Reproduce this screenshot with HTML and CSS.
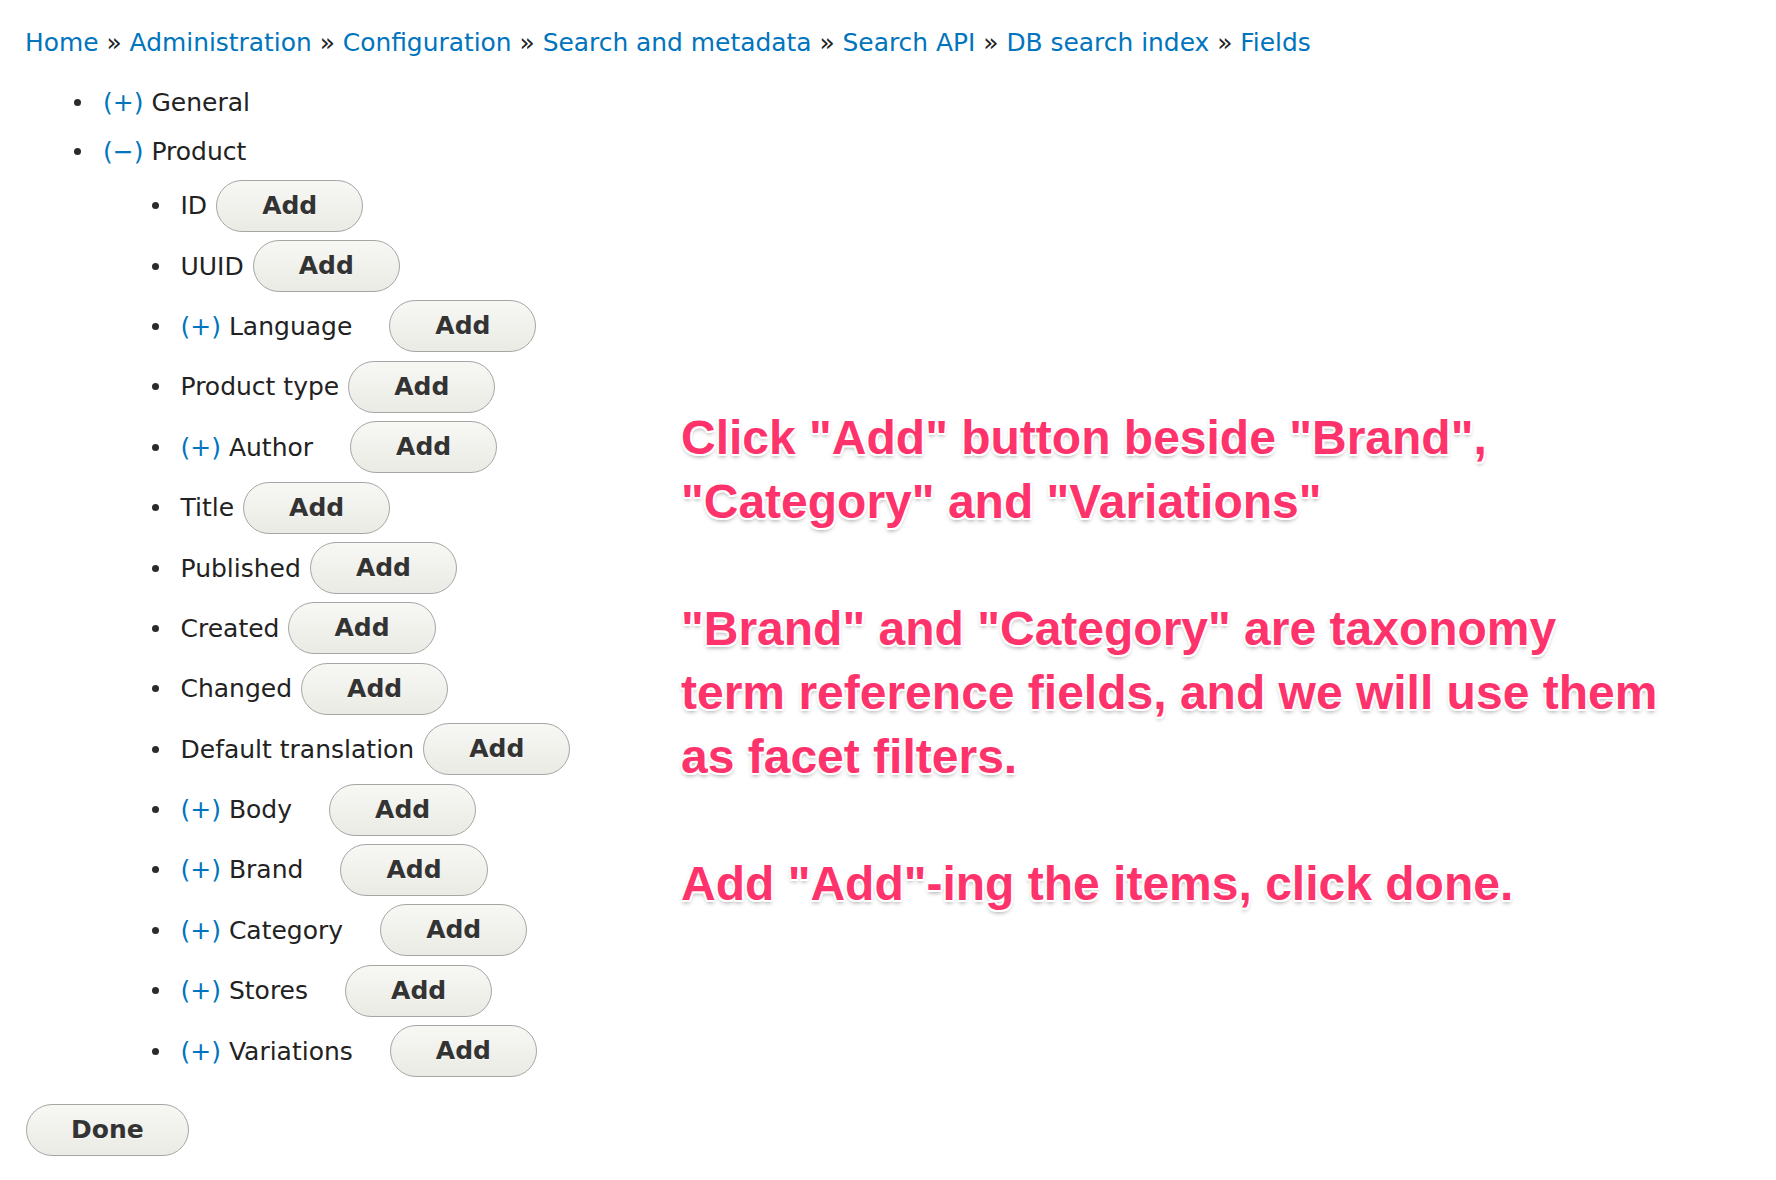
FILE: index.html
```html
<!DOCTYPE html>
<html lang="en">
<head>
<meta charset="utf-8">
<title>Fields | DB search index</title>
<link rel="stylesheet" href="styles.css">
</head>
<body>
<div class="page">
  <nav class="breadcrumb">
    <a href="#">Home</a> » <a href="#">Administration</a> » <a href="#">Configuration</a> » <a href="#">Search and metadata</a> » <a href="#">Search API</a> » <a href="#">DB search index</a> » <a href="#">Fields</a>
  </nav>
  <div class="content">
    <div class="form">
      <ul class="tree">
        <li class="top"><span class="row"><a class="toggle" href="#">(+)</a> General</span></li>
        <li class="top"><span class="row"><a class="toggle" href="#">(−)</a> Product</span>
          <ul class="fields">
            <li><span class="label">ID</span><button class="btn">Add</button></li>
            <li><span class="label">UUID</span><button class="btn">Add</button></li>
            <li class="exp"><span class="label"><a class="toggle" href="#">(+)</a> Language</span><button class="btn">Add</button></li>
            <li><span class="label">Product type</span><button class="btn">Add</button></li>
            <li class="exp"><span class="label"><a class="toggle" href="#">(+)</a> Author</span><button class="btn">Add</button></li>
            <li><span class="label">Title</span><button class="btn">Add</button></li>
            <li><span class="label">Published</span><button class="btn">Add</button></li>
            <li><span class="label">Created</span><button class="btn">Add</button></li>
            <li><span class="label">Changed</span><button class="btn">Add</button></li>
            <li><span class="label">Default translation</span><button class="btn">Add</button></li>
            <li class="exp"><span class="label"><a class="toggle" href="#">(+)</a> Body</span><button class="btn">Add</button></li>
            <li class="exp"><span class="label"><a class="toggle" href="#">(+)</a> Brand</span><button class="btn">Add</button></li>
            <li class="exp"><span class="label"><a class="toggle" href="#">(+)</a> Category</span><button class="btn">Add</button></li>
            <li class="exp"><span class="label"><a class="toggle" href="#">(+)</a> Stores</span><button class="btn">Add</button></li>
            <li class="exp"><span class="label"><a class="toggle" href="#">(+)</a> Variations</span><button class="btn">Add</button></li>
          </ul>
        </li>
      </ul>
      <button class="btn done">Done</button>
    </div>
    <div class="note">
      <p>Click "Add" button beside "Brand",<br>"Category" and "Variations"</p>
      <p>"Brand" and "Category" are taxonomy<br>term reference fields, and we will use them<br>as facet filters.</p>
      <p>Add "Add"-ing the items, click done.</p>
    </div>
  </div>
</div>
</body>
</html>
```
FILE: styles.css
```css
html, body {
  margin: 0;
  padding: 0;
  background: #ffffff;
}

.page {
  padding: 28px 0 0 25px;
  font-family: "DejaVu Sans", "Noto Sans", sans-serif;
  font-size: 25px;
  color: #222222;
}

a {
  color: #0074bd;
  text-decoration: none;
}

.breadcrumb {
  font-size: 24.9px;
  line-height: 30px;
  height: 30px;
  white-space: nowrap;
}

.content {
  display: flex;
  margin-top: 19.5px;
}

.form {
  width: 656px;
  flex: none;
}

.tree,
.fields {
  list-style: none;
  margin: 0;
  padding: 0;
}

.tree {
  padding-left: 49px;
}

.row {
  display: flex;
  align-items: center;
  height: 49px;
  white-space: pre;
}

.row::before,
.fields li::before {
  content: "";
  width: 7px;
  height: 7px;
  border-radius: 50%;
  background: #2b2b2b;
  flex: none;
  margin-right: 22px;
}

.fields {
  margin-left: 77.5px;
}

.fields li {
  display: flex;
  align-items: center;
  height: 60.4px;
}

.label {
  white-space: pre;
  margin-right: 9px;
}

.fields li.exp .label {
  margin-right: 37px;
}

.btn {
  font-family: "DejaVu Sans", "Noto Sans", sans-serif;
  font-size: 25px;
  font-weight: bold;
  color: #333333;
  height: 52px;
  padding: 0 45px;
  border: 1px solid #a6a6a6;
  border-radius: 26px;
  background: linear-gradient(to bottom, #f7f7f4 0%, #ebebe5 100%);
  text-shadow: 0 1px 0 rgba(255, 255, 255, 0.6);
  line-height: 50px;
  box-sizing: border-box;
  flex: none;
}

.done {
  display: block;
  margin-top: 23px;
  padding: 0 44px;
  margin-left: 1px;
}

.note {
  padding-top: 328.5px;
  font-family: "Liberation Sans", Arial, sans-serif;
  font-weight: bold;
  font-size: 48px;
  line-height: 63.7px;
  color: #ff336b;
  white-space: nowrap;
  text-shadow:
    1.5px 1.5px 0 #fff,
    -1.5px -1.5px 0 #fff,
    1.5px -1.5px 0 #fff,
    -1.5px 1.5px 0 #fff,
    0 2px 0 #fff,
    0 -2px 0 #fff,
    2px 0 0 #fff,
    -2px 0 0 #fff,
    0 3px 4px rgba(0, 0, 0, 0.35);
}

.note p {
  margin: 0 0 63.7px 0;
}
```
